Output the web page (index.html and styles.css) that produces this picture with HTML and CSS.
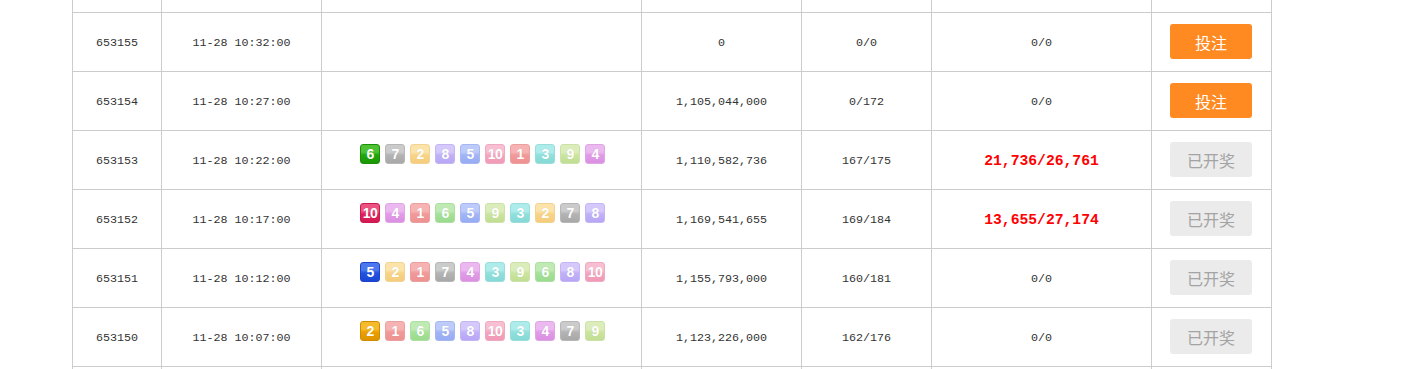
FILE: index.html
```html
<!DOCTYPE html>
<html lang="zh-CN">
<head>
<meta charset="utf-8">
<title>开奖记录</title>
<link rel="stylesheet" href="styles.css">
</head>
<body>
<div class="grid">
  <div class="cell top"></div><div class="cell top"></div><div class="cell top"></div><div class="cell top"></div><div class="cell top"></div><div class="cell top"></div><div class="cell top"></div>

  <div class="cell">653155</div>
  <div class="cell">11-28 10:32:00</div>
  <div class="cell"></div>
  <div class="cell">0</div>
  <div class="cell">0/0</div>
  <div class="cell">0/0</div>
  <div class="cell action"><a class="btn bet">投注</a></div>

  <div class="cell">653154</div>
  <div class="cell">11-28 10:27:00</div>
  <div class="cell"></div>
  <div class="cell">1,105,044,000</div>
  <div class="cell">0/172</div>
  <div class="cell">0/0</div>
  <div class="cell action"><a class="btn bet">投注</a></div>

  <div class="cell">653153</div>
  <div class="cell">11-28 10:22:00</div>
  <div class="cell balls"><span class="ball hot-6">6</span><span class="ball n7">7</span><span class="ball n2">2</span><span class="ball n8">8</span><span class="ball n5">5</span><span class="ball n10">10</span><span class="ball n1">1</span><span class="ball n3">3</span><span class="ball n9">9</span><span class="ball n4">4</span></div>
  <div class="cell">1,110,582,736</div>
  <div class="cell">167/175</div>
  <div class="cell win">21,736/26,761</div>
  <div class="cell action"><span class="btn done">已开奖</span></div>

  <div class="cell">653152</div>
  <div class="cell">11-28 10:17:00</div>
  <div class="cell balls"><span class="ball hot-10">10</span><span class="ball n4">4</span><span class="ball n1">1</span><span class="ball n6">6</span><span class="ball n5">5</span><span class="ball n9">9</span><span class="ball n3">3</span><span class="ball n2">2</span><span class="ball n7">7</span><span class="ball n8">8</span></div>
  <div class="cell">1,169,541,655</div>
  <div class="cell">169/184</div>
  <div class="cell win">13,655/27,174</div>
  <div class="cell action"><span class="btn done">已开奖</span></div>

  <div class="cell">653151</div>
  <div class="cell">11-28 10:12:00</div>
  <div class="cell balls"><span class="ball hot-5">5</span><span class="ball n2">2</span><span class="ball n1">1</span><span class="ball n7">7</span><span class="ball n4">4</span><span class="ball n3">3</span><span class="ball n9">9</span><span class="ball n6">6</span><span class="ball n8">8</span><span class="ball n10">10</span></div>
  <div class="cell">1,155,793,000</div>
  <div class="cell">160/181</div>
  <div class="cell">0/0</div>
  <div class="cell action"><span class="btn done">已开奖</span></div>

  <div class="cell">653150</div>
  <div class="cell">11-28 10:07:00</div>
  <div class="cell balls"><span class="ball hot-2">2</span><span class="ball n1">1</span><span class="ball n6">6</span><span class="ball n5">5</span><span class="ball n8">8</span><span class="ball n10">10</span><span class="ball n3">3</span><span class="ball n4">4</span><span class="ball n7">7</span><span class="ball n9">9</span></div>
  <div class="cell">1,123,226,000</div>
  <div class="cell">162/176</div>
  <div class="cell">0/0</div>
  <div class="cell action"><span class="btn done">已开奖</span></div>

  <div class="cell"></div><div class="cell"></div><div class="cell"></div><div class="cell"></div><div class="cell"></div><div class="cell"></div><div class="cell"></div>
</div>
</body>
</html>
```

FILE: styles.css
```css
html, body {
  margin: 0;
  padding: 0;
  background: #fff;
  overflow: hidden;
}

.grid {
  display: grid;
  grid-template-columns: 89px 160px 320px 160px 130px 220px 120px;
  grid-template-rows: 13px;
  grid-auto-rows: 59px;
  width: 1199px;
  margin-left: 72px;
  border-left: 1px solid #cccccc;
  font-family: "Liberation Mono", "Noto Sans CJK SC", monospace;
  font-size: 11.7px;
  color: #333;
}

.cell {
  box-sizing: border-box;
  border-right: 1px solid #cccccc;
  border-bottom: 1px solid #cccccc;
  display: flex;
  align-items: center;
  justify-content: center;
  padding-top: 1px;
  white-space: nowrap;
}

.cell.top {
  height: 13px;
  padding-top: 0;
}

.win {
  color: #ff0000;
  font-weight: bold;
  font-size: 14.7px;
}

.balls {
  align-items: flex-start;
  justify-content: flex-start;
  padding: 13px 0 0 38px;
  gap: 5px;
}

.ball {
  box-sizing: border-box;
  width: 20px;
  height: 20px;
  border-radius: 3px;
  border: 1px solid var(--bd);
  background: linear-gradient(to bottom, var(--hi) 0%, var(--hi) 40%, var(--c) 55%, var(--lo) 100%);
  color: #fff;
  font-family: "Liberation Sans", Arial, sans-serif;
  font-weight: bold;
  font-size: 14px;
  letter-spacing: -0.6px;
  line-height: 18px;
  text-align: center;
  text-shadow: 0 0 1px rgba(0, 0, 0, 0.12);
}

.n1 { --hi: #f7b3b3; --c: #f19a9a; --lo: #ee9191; --bd: #eba0a0; }
.n2 { --hi: #fbe3aa; --c: #f8d488; --lo: #f5cc7c; --bd: #f1d394; }
.n3 { --hi: #aeeceb; --c: #90e0dc; --lo: #86d9d5; --bd: #9adedb; }
.n4 { --hi: #ecb8f0; --c: #e19be8; --lo: #db90e2; --bd: #dfa6e4; }
.n5 { --hi: #bccbfa; --c: #a2b5f6; --lo: #97acf3; --bd: #a7b7f1; }
.n6 { --hi: #bfeab4; --c: #a6e19a; --lo: #9bda8f; --bd: #ace0a2; }
.n7 { --hi: #cbcbcb; --c: #b4b4b4; --lo: #a8a8a8; --bd: #b7b7b7; }
.n8 { --hi: #d5c9fb; --c: #c1b1f8; --lo: #b8a6f5; --bd: #c4b6f3; }
.n9 { --hi: #dbedbb; --c: #cbe5a0; --lo: #c1de93; --bd: #cce2a8; }
.n10 { --hi: #f8bfd2; --c: #f4a5bf; --lo: #f09ab6; --bd: #eeaac1; }

.hot-6 { --hi: #4cc234; --c: #23a60c; --lo: #1a9805; --bd: #1c8f09; }
.hot-10 { --hi: #ec5282; --c: #e0215c; --lo: #d41a52; --bd: #c91a50; }
.hot-5 { --hi: #4c77ee; --c: #2352e2; --lo: #1a45d6; --bd: #1c43c4; }
.hot-2 { --hi: #f6bb2c; --c: #eaa000; --lo: #de9400; --bd: #d08c00; }

.action {
  align-items: flex-start;
  justify-content: flex-start;
  padding: 11px 0 0 18px;
}

.btn {
  box-sizing: border-box;
  display: flex;
  align-items: center;
  justify-content: center;
  width: 82px;
  height: 35px;
  border-radius: 3px;
  font-family: "Noto Sans CJK SC", "Microsoft YaHei", sans-serif;
  font-size: 16px;
  text-decoration: none;
}

.bet {
  background: #ff8a22;
  color: #fff;
}

.done {
  background: #ebebeb;
  color: #a3a3a3;
}
```
